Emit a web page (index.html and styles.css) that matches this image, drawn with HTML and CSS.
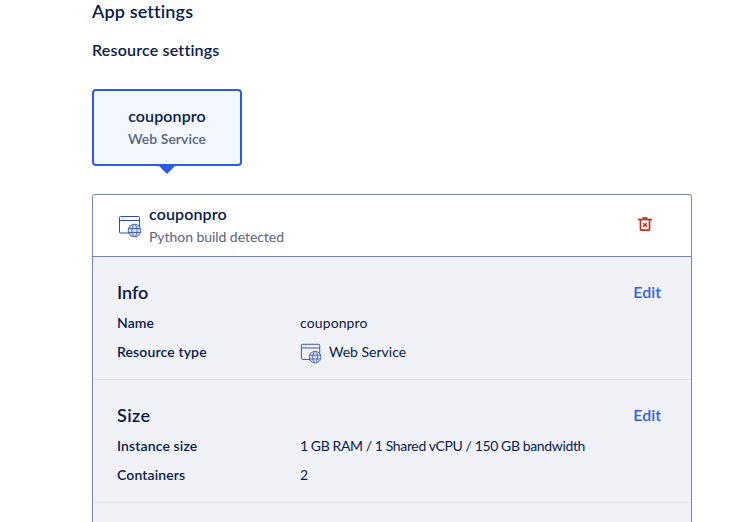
FILE: index.html
```html
<!DOCTYPE html>
<html lang="en">
<head>
<meta charset="utf-8">
<title>App settings</title>
<link rel="stylesheet" href="styles.css">
</head>
<body>
<svg class="sprite" aria-hidden="true">
  <symbol id="web-service" viewBox="0 0 24 24">
    <rect x="1.5" y="2.5" width="20" height="16.5" rx="1" stroke="#2d4b9e" fill="none"/>
    <path d="M2 6.5h19" stroke="#2d4b9e"/>
    <path d="M3.500 4.500h1M5.500 4.500h1" stroke="#8fa3dc"/>
    <circle cx="16.500" cy="16.500" r="6.300" fill="#d6e2fb" stroke="#4562b5"/>
    <path d="M10.500 14.500h12M10.500 18.500h12M16 10.500c-2.800 3-2.800 9 0 12M17 10.500c2.800 3 2.800 9 0 12" fill="none" stroke="#3a58b0" stroke-width=".9"/>
  </symbol>
</svg>
<main class="page">
  <h1 class="title">App settings</h1>
  <h2 class="subtitle">Resource settings</h2>
  <div class="tab">
    <strong class="tab-name">couponpro</strong>
    <span class="tab-type">Web Service</span>
  </div>
  <section class="panel">
    <header class="panel-head">
      <svg class="head-icon"><use href="#web-service"/></svg>
      <div class="head-text">
        <strong class="head-name">couponpro</strong>
        <span class="head-note">Python build detected</span>
      </div>
      <svg class="trash" viewBox="0 0 14 14" fill="none" stroke="#c1321f">
        <path d="M0 2.500h14" stroke-width="1.700"/>
        <path d="M4.500 1h5" stroke-width="1.700"/>
        <path d="M2.500 3v9.200q0 1 1 1h7q1 0 1-1V3" stroke-width="1.700"/>
        <path d="M5.200 6.200l3.600 3.600M8.800 6.200L5.200 9.800" stroke-width="1.600"/>
      </svg>
    </header>
    <div class="block">
      <div class="block-head"><h3 class="block-title">Info</h3><a class="edit">Edit</a></div>
      <dl class="rows">
        <dt>Name</dt><dd class="name-value">couponpro</dd>
        <dt>Resource type</dt><dd class="with-icon"><svg class="row-icon"><use href="#web-service"/></svg>Web Service</dd>
      </dl>
    </div>
    <div class="block">
      <div class="block-head"><h3 class="block-title size-title">Size</h3><a class="edit">Edit</a></div>
      <dl class="rows">
        <dt>Instance size</dt><dd class="size-value">1 GB RAM / 1 Shared vCPU / 150 GB bandwidth</dd>
        <dt>Containers</dt><dd>2</dd>
      </dl>
    </div>
  </section>
</main>
</body>
</html>
```

FILE: styles.css
```css
* { box-sizing: border-box; margin: 0; }
body { height: 522px; overflow: hidden; background: #fff; color: #081b4b; font-family: Lato, "Liberation Sans", sans-serif; font-size: 14px; font-variant-ligatures: none; }
.sprite { display: none; }
.page { width: 600px; margin-left: 92px; }
.title { height: 23px; font-size: 18px; font-weight: 600; line-height: 22px; letter-spacing: .14px; }
.subtitle { margin-top: 15px; font-size: 16px; font-weight: 600; line-height: 24px; letter-spacing: .19px; }
.tab { position: relative; display: flex; flex-direction: column; align-items: center; width: 150px; height: 77px; margin-top: 27px; padding-top: 13px; border: 2px solid #2d5bde; border-radius: 4px; background: #f3f8ff; }
.tab::after { content: ""; position: absolute; top: 75px; left: 65px; border: 8px solid transparent; border-top-color: #2d5bde; border-bottom: 0; }
.tab-name { font-size: 16px; font-weight: 600; line-height: 24px; letter-spacing: .12px; }
.tab-type { margin-top: 1px; font-weight: 600; line-height: 20px; color: #5b6480; letter-spacing: .04px; }
.panel { height: 328px; margin-top: 28px; border: 1px solid #7784ad; border-bottom: 0; border-radius: 3px 3px 0 0; background: #f1f2f8; }
.panel-head { display: flex; height: 62px; padding: 7px 39px 0 24px; border-bottom: 1px solid #7784ad; border-radius: 2px 2px 0 0; background: #fff; }
.head-icon { width: 24px; height: 24px; margin: 12px 0 0 1px; }
.head-text { display: flex; flex: 1; flex-direction: column; margin-left: 7px; }
.head-name { font-size: 16px; font-weight: 600; line-height: 24px; letter-spacing: .12px; }
.head-note { margin-top: 1px; line-height: 20px; color: #5b6480; letter-spacing: -.05px; }
.trash { width: 14px; height: 14px; margin-top: 15px; }
.block { height: 123px; padding: 23px 30px 0 24px; border-bottom: 1px solid #dfe1e8; }
.block-head { display: flex; justify-content: space-between; height: 24px; }
.block-title { font-size: 18px; font-weight: 600; line-height: 24px; }
.size-title { letter-spacing: .4px; }
.edit { font-size: 16px; font-weight: 600; line-height: 24px; color: #3561e6; }
.rows { display: grid; grid-template-columns: 183px 1fr; grid-auto-rows: 29px; margin-top: 4px; line-height: 29px; }
dt { font-weight: 600; letter-spacing: .13px; }
.name-value { letter-spacing: .12px; }
.size-value { letter-spacing: -.35px; word-spacing: -.15px; }
.with-icon { display: flex; align-items: center; }
.row-icon { width: 22px; height: 22px; margin: 2px 7px 0 0; }
```
